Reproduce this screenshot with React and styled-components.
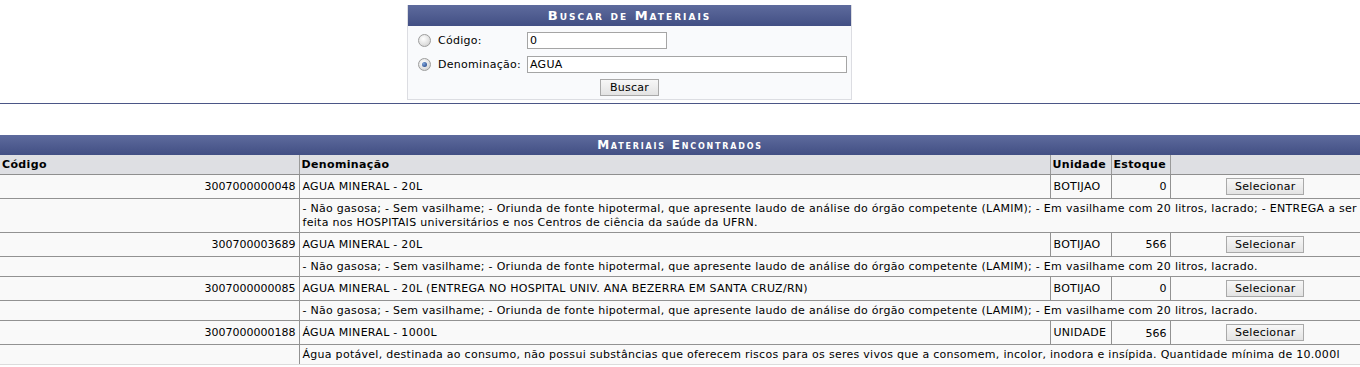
import React from "react";
import styled, { createGlobalStyle } from "styled-components";

const GlobalStyle = createGlobalStyle`
  body {
    margin: 0;
    background: #ffffff;
    font-family: "DejaVu Sans", Verdana, sans-serif;
    font-size: 11px;
    letter-spacing: 0.28px;
    color: #000;
  }
`

const Page = styled.div`
  width: 1360px;
  padding-top: 5px;
`
const SearchBox = styled.div`
  width: 443px;
  margin-left: 407px;
  border: 1px solid #dcdde2;
  border-top: none;
  background-color: #f9fafc;
`
const Caption = styled.div`
  height: 21px;
  line-height: 22px;
  background: linear-gradient(#5e6b9d, #424f84);
  color: #ffffff;
  font-weight: 700;
  font-variant: small-caps;
  font-size: 13px;
  letter-spacing: 2px;
  text-align: center;
`
const FormBody = styled.div`
  display: flex;
  flex-direction: column;
  padding: 6px 0 3px 10px;
`
const FieldRow = styled.div`
  display: flex;
  align-items: center;
  height: 17px;
  margin-bottom: ${(p) => p.$gap}px;
`
const Radio = styled.span`
  width: 11px;
  height: 11px;
  border-radius: 50%;
  border: 1px solid #9d9d9d;
  background: radial-gradient(circle at 40% 35%, #ffffff 0%, #e0e0e0 60%, #c4c4c4 100%);
  display: flex;
  align-items: center;
  justify-content: center;
  &::after {
    content: "";
    display: ${(p) => (p.$checked ? "block" : "none")};
    width: 5px;
    height: 5px;
    border-radius: 50%;
    background: radial-gradient(circle at 35% 35%, #7fa6dc, #1a3a7c);
  }
`
const FieldLabel = styled.label`
  width: 89px;
  margin-left: 7px;
  white-space: nowrap;
`
const TextInput = styled.div`
  width: ${(p) => p.$width}px;
  height: 15px;
  line-height: 15px;
  border: 1px solid #a5a5a5;
  background: #ffffff;
  padding-left: 2px;
`
const ButtonRow = styled.div`
  display: flex;
  justify-content: center;
  padding-right: 10px;
`
const Button = styled.button`
  height: 17px;
  padding: 0 ${(p) => p.$pad}px;
  border: 1px solid #a9a9a9;
  background: linear-gradient(#f7f7f7, #e3e3e3);
  font-family: "DejaVu Sans", Verdana, sans-serif;
  font-size: 11px;
  letter-spacing: 0.28px;
  line-height: 15px;
  color: #000;
  cursor: pointer;
  vertical-align: middle;
`
const Separator = styled.hr`
  margin: 3px 0 0 0;
  border: none;
  border-top: 1px solid #4b5686;
  height: 0;
`
const Table = styled.table`
  margin-top: 31px;
  width: 1360px;
  border-collapse: collapse;
  table-layout: fixed;
  background-color: #f9f9f9;
  border-bottom: 1px solid #dcdcdc;
`
const TableCaption = styled.caption`
  height: 20px;
  line-height: 21px;
  background: linear-gradient(#5e6b9d, #424f84);
  color: #ffffff;
  font-weight: 700;
  font-variant: small-caps;
  font-size: 12px;
  letter-spacing: 1.8px;
  text-align: center;
`
const HeadCell = styled.th`
  height: 14px;
  background-color: #dedfe3;
  font-weight: 700;
  text-align: left;
  padding: 3px 2px 2px 2px;
  line-height: 14px;
  letter-spacing: 0.35px;
  border-bottom: 1px solid #8f8f8f;
  border-left: ${(p) => (p.$first ? "none" : "1px solid #9a9a9a")};
`
const Cell = styled.td`
  height: ${(p) => p.$h || 14}px;
  padding: 3px 3px ${(p) => (p.$desc ? 2 : 3)}px 3px;
  line-height: 14px;
  letter-spacing: ${(p) => (p.$number ? "0" : "0.28px")};
  text-align: ${(p) => p.$align || "left"};
  vertical-align: ${(p) => p.$valign || "middle"};
  border-bottom: 1px solid ${(p) => (p.$last ? "#dcdcdc" : "#929292")};
  border-left: ${(p) => (p.$first ? "none" : "1px solid #929292")};
`

const materials = [
  {
    code: "3007000000048",
    name: "AGUA MINERAL - 20L",
    unit: "BOTIJAO",
    stock: "0",
    desc: "- Não gasosa; - Sem vasilhame; - Oriunda de fonte hipotermal, que apresente laudo de análise do órgão competente (LAMIM); - Em vasilhame com 20 litros, lacrado; - ENTREGA a ser feita nos HOSPITAIS universitários e nos Centros de ciência da saúde da UFRN.",
  },
  {
    code: "300700003689",
    name: "AGUA MINERAL - 20L",
    unit: "BOTIJAO",
    stock: "566",
    desc: "- Não gasosa; - Sem vasilhame; - Oriunda de fonte hipotermal, que apresente laudo de análise do órgão competente (LAMIM); - Em vasilhame com 20 litros, lacrado.",
  },
  {
    code: "3007000000085",
    name: "AGUA MINERAL - 20L (ENTREGA NO HOSPITAL UNIV. ANA BEZERRA EM SANTA CRUZ/RN)",
    unit: "BOTIJAO",
    stock: "0",
    desc: "- Não gasosa; - Sem vasilhame; - Oriunda de fonte hipotermal, que apresente laudo de análise do órgão competente (LAMIM); - Em vasilhame com 20 litros, lacrado.",
  },
  {
    code: "3007000000188",
    name: "ÁGUA MINERAL - 1000L",
    unit: "UNIDADE",
    stock: "566",
    stockValign: "bottom",
    desc: "Água potável, destinada ao consumo, não possui substâncias que oferecem riscos para os seres vivos que a consomem, incolor, inodora e insípida. Quantidade mínima de 10.000l",
  },
]

export default function App() {
  return (
    <Page>
      <GlobalStyle />
      <SearchBox>
        <Caption>Buscar de Materiais</Caption>
        <FormBody>
          <FieldRow $gap={7}>
            <Radio />
            <FieldLabel>Código:</FieldLabel>
            <TextInput $width={136}>0</TextInput>
          </FieldRow>
          <FieldRow $gap={6}>
            <Radio $checked />
            <FieldLabel>Denominação:</FieldLabel>
            <TextInput $width={316}>AGUA</TextInput>
          </FieldRow>
          <ButtonRow>
            <Button $pad={9}>Buscar</Button>
          </ButtonRow>
        </FormBody>
      </SearchBox>
      <Separator />
      <Table>
        <colgroup>
          <col style={{ width: 299 }} />
          <col style={{ width: 751 }} />
          <col style={{ width: 61 }} />
          <col style={{ width: 59 }} />
          <col style={{ width: 190 }} />
        </colgroup>
        <TableCaption>Materiais Encontrados</TableCaption>
        <thead>
          <tr>
            <HeadCell $first>Código</HeadCell>
            <HeadCell>Denominação</HeadCell>
            <HeadCell>Unidade</HeadCell>
            <HeadCell>Estoque</HeadCell>
            <HeadCell></HeadCell>
          </tr>
        </thead>
        <tbody>
          {materials.map((m, i) => {
            const last = i === materials.length - 1
            return (
              <React.Fragment key={m.code}>
                <tr>
                  <Cell $h={16} $first $number $align="right">{m.code}</Cell>
                  <Cell $h={16}>{m.name}</Cell>
                  <Cell $h={16}>{m.unit}</Cell>
                  <Cell $h={16} $number $align="right" $valign={m.stockValign}>{m.stock}</Cell>
                  <Cell $h={16} $align="center">
                    <Button $pad={8}>Selecionar</Button>
                  </Cell>
                </tr>
                <tr>
                  <Cell $desc $first $last={last}></Cell>
                  <Cell $desc colSpan={4} $last={last}>{m.desc}</Cell>
                </tr>
              </React.Fragment>
            )
          })}
        </tbody>
      </Table>
    </Page>
  );
}
